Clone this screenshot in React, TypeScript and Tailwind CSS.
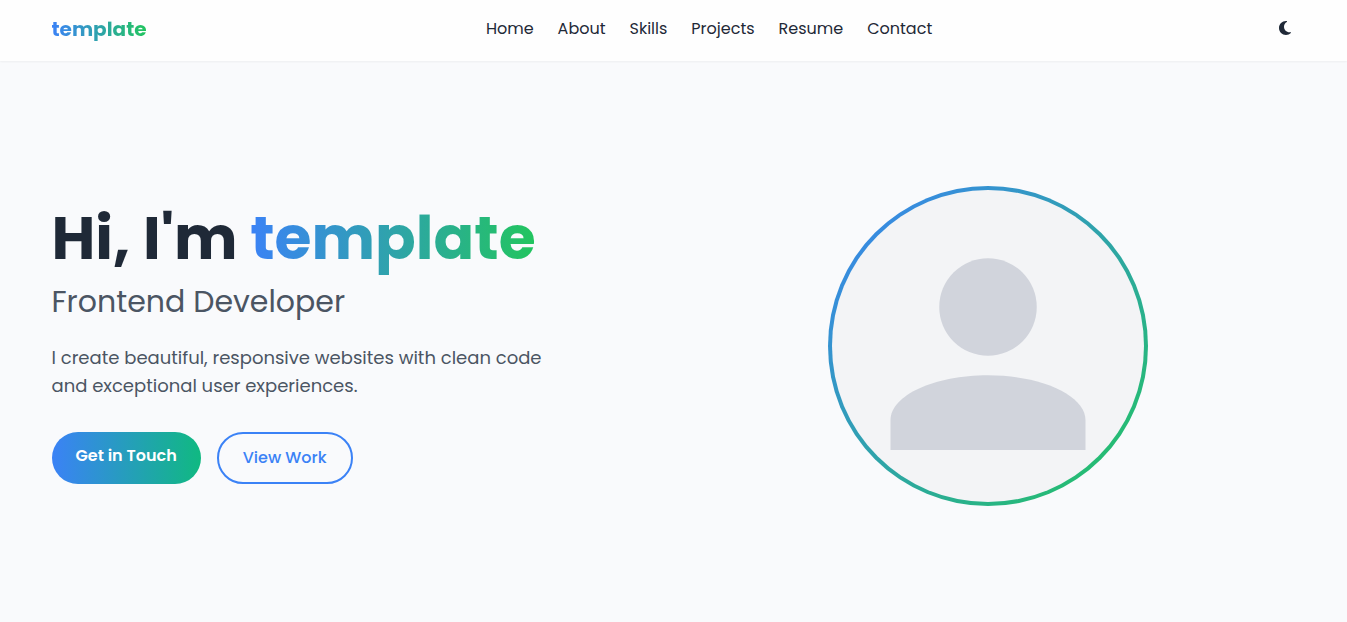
import { FaMoon } from "react-icons/fa6";

const links = ["Home", "About", "Skills", "Projects", "Resume", "Contact"];

function Header() {
  return (
    <header className="bg-[#fefefe] shadow-[0_1px_2px_rgba(0,0,0,0.05)]">
      <div className="mx-auto flex h-[61px] max-w-[1244px] items-center justify-between pb-1">
        <a
          href="#home"
          className="bg-[linear-gradient(90deg,#3b82f6,#22c55e)] bg-clip-text text-xl font-bold text-transparent"
        >
          template
        </a>
        <nav className="flex gap-6">
          {links.map((link) => (
            <a key={link} href={`#${link.toLowerCase()}`} className="text-base text-[#1f2937]">
              {link}
            </a>
          ))}
        </nav>
        <button type="button" aria-label="Toggle dark mode" className="-mr-1 px-2 pt-1 pb-1.5 text-[#1f2937]">
          <FaMoon className="h-4 w-3" />
        </button>
      </div>
    </header>
  );
}

function Avatar() {
  return (
    <div className="size-80 rounded-full bg-[linear-gradient(135deg,#3b82f6,#22c55e)] p-1">
      <svg viewBox="0 0 128 128" className="size-full rounded-full bg-[#f3f4f6]" role="img" aria-label="Profile">
        <g className="fill-[#d1d4dc]">
          <circle cx="64" cy="48" r="20" />
          <path d="M24 106.67V94.4C24 84.27 41.9 76 64 76s40 8.27 40 18.4v12.27z" />
        </g>
      </svg>
    </div>
  );
}

export default function App() {
  return (
    <div className="flex min-h-screen flex-col bg-[#f9fafc] font-['Poppins','Inter',sans-serif]">
      <Header />
      <main className="mx-auto grid w-full max-w-[1244px] flex-1 grid-cols-2 items-center gap-3 pt-2">
        <section>
          <h1 className="mb-4 text-6xl leading-[60px] font-bold whitespace-nowrap text-[#1f2937]">
            Hi, I'm{" "}
            <span className="bg-[linear-gradient(90deg,#3b82f6,#22c55e)] bg-clip-text text-transparent">
              template
            </span>
          </h1>
          <h2 className="mb-6 text-3xl leading-9 text-[#4b5563]">Frontend Developer</h2>
          <p className="mb-8 max-w-lg text-lg leading-7 text-[#4b5563]">
            I create beautiful, responsive websites with clean code and exceptional user experiences.
          </p>
          <div className="flex gap-4">
            <a
              href="#contact"
              className="rounded-full bg-[linear-gradient(90deg,#3b82f6,#10b981)] px-6 py-3 text-center font-semibold text-white"
            >
              Get in Touch
            </a>
            <a
              href="#projects"
              className="rounded-full border-2 border-[#3b82f6] px-6 py-3 text-center font-medium text-[#3b82f6]"
            >
              View Work
            </a>
          </div>
        </section>
        <div className="flex justify-center">
          <Avatar />
        </div>
      </main>
    </div>
  );
}
